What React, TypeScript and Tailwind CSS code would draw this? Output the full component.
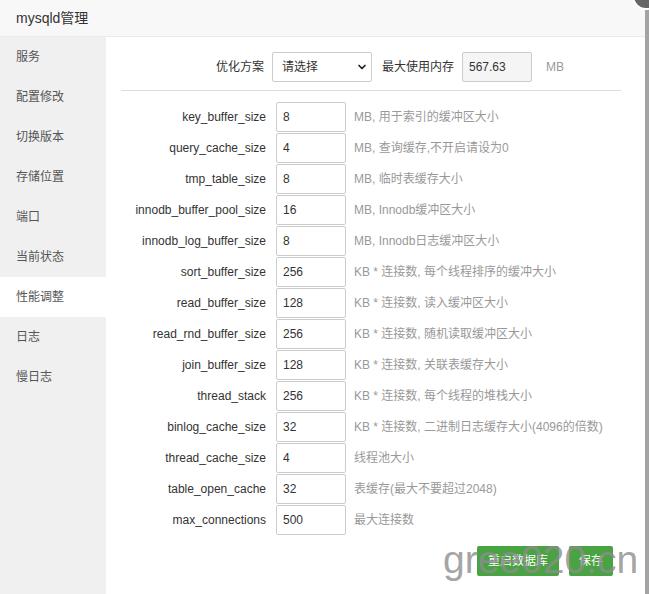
import { ChevronDown } from "lucide-react";

const menu = ["服务", "配置修改", "切换版本", "存储位置", "端口", "当前状态", "性能调整", "日志", "慢日志"];

const rows = [
    { name: "key_buffer_size", value: "8", desc: "MB, 用于索引的缓冲区大小" },
    { name: "query_cache_size", value: "4", desc: "MB, 查询缓存,不开启请设为0" },
    { name: "tmp_table_size", value: "8", desc: "MB, 临时表缓存大小" },
    { name: "innodb_buffer_pool_size", value: "16", desc: "MB, Innodb缓冲区大小" },
    { name: "innodb_log_buffer_size", value: "8", desc: "MB, Innodb日志缓冲区大小" },
    { name: "sort_buffer_size", value: "256", desc: "KB * 连接数, 每个线程排序的缓冲大小" },
    { name: "read_buffer_size", value: "128", desc: "KB * 连接数, 读入缓冲区大小" },
    { name: "read_rnd_buffer_size", value: "256", desc: "KB * 连接数, 随机读取缓冲区大小" },
    { name: "join_buffer_size", value: "128", desc: "KB * 连接数, 关联表缓存大小" },
    { name: "thread_stack", value: "256", desc: "KB * 连接数, 每个线程的堆栈大小" },
    { name: "binlog_cache_size", value: "32", desc: "KB * 连接数, 二进制日志缓存大小(4096的倍数)" },
    { name: "thread_cache_size", value: "4", desc: "线程池大小" },
    { name: "table_open_cache", value: "32", desc: "表缓存(最大不要超过2048)" },
    { name: "max_connections", value: "500", desc: "最大连接数" },
];

export default function App() {
    return (
        <div className="relative w-[649px] h-[594px] overflow-hidden bg-[#a3a3a3] font-['Liberation_Sans','Noto_Sans_CJK_SC',sans-serif] text-[12px] text-[#333]">
            <div className="flex flex-col w-[645px] h-full bg-white">
                <div className="h-[37px] shrink-0 flex items-center pl-[16px] bg-[#f8f8f8] border-b border-[#eaeaea] text-[14px] text-[#333]">
                    mysqld管理
                </div>
                <div className="flex flex-1">
                    <div className="w-[106px] shrink-0 bg-[#f0f0f0]">
                        {menu.map((m) => (
                            <div
                                key={m}
                                className={`h-[40px] flex items-center pl-[16px] text-[12px] text-[#555] ${m === "性能调整" ? "bg-white" : ""}`}
                            >
                                {m}
                            </div>
                        ))}
                    </div>
                    <div className="flex-1 pl-[15px] pr-[24px] pt-[15px]">
                        <div className="flex items-center h-[30px]">
                            <div className="w-[143px] text-right">优化方案</div>
                            <div className="relative ml-[8px] w-[100px] h-[30px]">
                                <select className="appearance-none w-full h-full border border-[#ccc] rounded-[2px] bg-white pl-[9px] text-[12px] text-[#333] outline-none">
                                    <option>请选择</option>
                                </select>
                                <ChevronDown className="absolute right-[4px] top-[9px] w-[12px] h-[12px] text-[#222] pointer-events-none" strokeWidth={3.5} />
                            </div>
                            <div className="ml-[10px]">最大使用内存</div>
                            <input
                                readOnly
                                value="567.63"
                                className="ml-[8px] w-[70px] h-[30px] border border-[#ccc] rounded-[2px] bg-[#f5f5f5] pl-[6px] text-[12px] text-[#333] outline-none"
                            />
                            <div className="ml-[14px] text-[#999]">MB</div>
                        </div>
                        <div className="mt-[8px] h-px bg-[#ddd]" />
                        <div className="mt-[11px] flex flex-col gap-[1px]">
                            {rows.map((r) => (
                                <div key={r.name} className="flex items-center h-[30px]">
                                    <div className="w-[145px] text-right">{r.name}</div>
                                    <input
                                        readOnly
                                        value={r.value}
                                        className="ml-[10px] w-[70px] h-[30px] border border-[#ccc] rounded-[2px] bg-white pl-[6px] text-[12px] text-[#333] outline-none"
                                    />
                                    <div className="ml-[8px] text-[#999]">{r.desc}</div>
                                </div>
                            ))}
                        </div>
                        <div className="mt-[11px] flex justify-end gap-[10px] pr-[8px]">
                            <button className="h-[30px] px-[11px] rounded-[2px] bg-[#4aa343] text-white text-[12px]">重启数据库</button>
                            <button className="h-[30px] px-[10px] rounded-[2px] bg-[#4aa343] text-white text-[12px]">保存</button>
                        </div>
                    </div>
                </div>
            </div>
            <div className="absolute left-[632px] top-[-18px] w-[28px] h-[28px] rounded-full bg-[#666] border-2 border-white" />
            <div className="absolute left-[443px] top-[534px] pointer-events-none text-[39px] leading-[52px] text-[#8c8c8c]/80 font-['Liberation_Sans',sans-serif]">
                gree020.cn
            </div>
        </div>
    );
}
